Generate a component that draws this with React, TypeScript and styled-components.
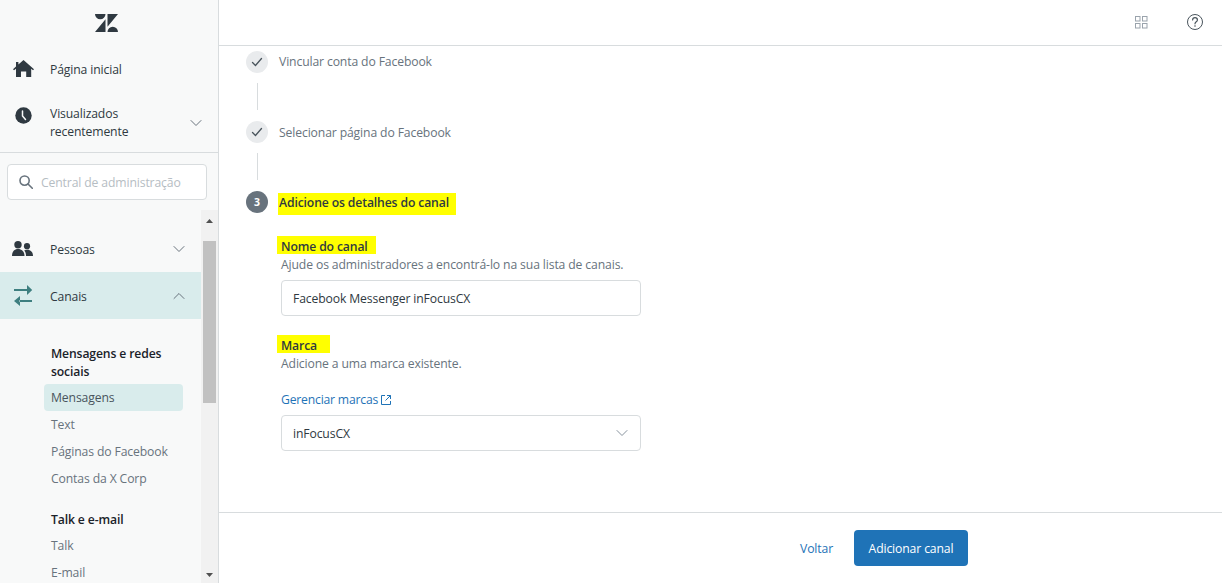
import React from "react";
import styled, { createGlobalStyle } from "styled-components";

const GlobalStyle = createGlobalStyle`
  html, body {
    margin: 0;
    padding: 0;
    height: 100%;
    overflow: hidden;
    background: #fff;
  }
  * {
    box-sizing: border-box;
  }
`;

const fontStack = `"Open Sans", "Noto Sans", "Liberation Sans", sans-serif`;

const Page = styled.div`
  display: flex;
  width: 1222px;
  height: 583px;
  overflow: hidden;
  font-family: ${fontStack};
  font-size: 12.2px;
  letter-spacing: -0.13px;
  color: #2f3941;
`;

const Sidebar = styled.aside`
  display: flex;
  flex-direction: column;
  flex: 0 0 219px;
  height: 583px;
  background: #f8f9f9;
  border-right: 1px solid #d8dcde;
`;

const LogoBar = styled.div`
  display: flex;
  justify-content: center;
  align-items: center;
  height: 45px;
  padding-right: 6px;
`;

const TopNav = styled.nav`
  display: flex;
  flex-direction: column;
  height: 108px;
  border-bottom: 1px solid #d8dcde;
`;

const NavRow = styled.div<{ $active?: boolean; $height: number }>`
  display: flex;
  align-items: center;
  height: ${(p) => p.$height}px;
  background: ${(p) => (p.$active ? "#d9ecec" : "transparent")};
  line-height: 18px;
  color: #2f3941;
`;

const NavIcon = styled.span<{ $lift?: number }>`
  display: flex;
  justify-content: center;
  align-items: center;
  flex: 0 0 50px;
  padding-right: 4px;
  padding-bottom: ${(p) => p.$lift ?? 0}px;
`;

const NavLabel = styled.span`
  flex: 1;
  padding-top: 2px;
`;

const NavCaret = styled.span`
  display: flex;
  justify-content: center;
  flex: 0 0 44px;
  padding-top: 1px;
`;

const SearchWrap = styled.div`
  height: 57px;
  padding: 11px 11px 0 7px;
`;

const SearchBox = styled.div`
  display: flex;
  align-items: center;
  gap: 8px;
  height: 36px;
  padding-left: 11px;
  background: #fff;
  border: 1px solid #d8dcde;
  border-radius: 4px;
  color: #b6bdc3;
`;

const ScrollArea = styled.div`
  display: flex;
  flex: 1;
  min-height: 0;
`;

const ScrollContent = styled.div`
  flex: 0 0 201px;
  padding-top: 15px;
  overflow: hidden;
`;

const SubNav = styled.div`
  display: flex;
  flex-direction: column;
  padding: 26px 18px 0 44px;
`;

const SubTitle = styled.div<{ $gap?: number }>`
  margin-top: ${(p) => p.$gap ?? 0}px;
  margin-bottom: 3px;
  padding: 0 7px;
  font-weight: 600;
  line-height: 18px;
  color: #1a2229;
`;

const SubItem = styled.div<{ $active?: boolean }>`
  flex: 0 0 27px;
  padding: 0 7px;
  border-radius: 4px;
  background: ${(p) => (p.$active ? "#d9ecec" : "transparent")};
  line-height: 27px;
  color: ${(p) => (p.$active ? "#49545c" : "#68737d")};
`;

const Scrollbar = styled.div`
  display: flex;
  flex-direction: column;
  flex: 0 0 17px;
  padding-top: 2px;
  background: #f1f1f1;
`;

const ScrollArrow = styled.div`
  display: flex;
  flex: 0 0 17px;
  justify-content: center;
  align-items: center;
`;

const ScrollThumb = styled.div`
  flex: 0 0 162px;
  margin: 12px 2px 0;
  background: #c1c1c1;
`;

const ScrollSpacer = styled.div`
  flex: 1;
`;

const Main = styled.main`
  display: flex;
  flex-direction: column;
  flex: 1;
  min-width: 0;
`;

const Header = styled.header`
  display: flex;
  align-items: center;
  justify-content: flex-end;
  gap: 39px;
  height: 46px;
  padding: 0 19px 1px 0;
  border-bottom: 1px solid #d8dcde;
`;

const Content = styled.div`
  flex: 1;
  padding: 5px 0 0 27px;
  overflow: hidden;
`;

const Step = styled.div`
  display: flex;
  align-items: center;
  gap: 11px;
  height: 22px;
`;

const StepCircle = styled.span<{ $current?: boolean }>`
  display: flex;
  justify-content: center;
  align-items: center;
  flex: 0 0 22px;
  height: 22px;
  border-radius: 50%;
  background: ${(p) => (p.$current ? "#68737d" : "#e9ebed")};
  color: #fff;
  font-size: 10.5px;
  font-weight: 700;
`;

const StepLabel = styled.span<{ $nudge?: number }>`
  margin-top: ${(p) => p.$nudge ?? 0}px;
  color: #68737d;
`;

const Connector = styled.div`
  width: 1px;
  height: 27px;
  margin: 10px 0 11px 11px;
  background: #d8dcde;
`;

const Marker = styled.span`
  display: inline-block;
  width: 178px;
  height: 22px;
  margin: 4px 0 0 -1px;
  padding-left: 1px;
  background: #ffff00;
  font-weight: 600;
  line-height: 20px;
  color: #2f3941;
`;

const Form = styled.div`
  display: flex;
  flex-direction: column;
  width: 360px;
  margin: 23px 0 0 35px;
`;

const FieldMarker = styled.span<{ $width: number; $gap?: number }>`
  align-self: flex-start;
  width: ${(p) => p.$width}px;
  height: 18px;
  margin-top: ${(p) => p.$gap ?? 0}px;
  margin-left: -4px;
  padding-left: 4px;
  background: #ffff00;
  font-weight: 600;
  line-height: 22px;
  color: #2f3941;
`;

const Hint = styled.div`
  margin-top: 2px;
  line-height: 18px;
  color: #68737d;
`;

const TextBox = styled.div`
  display: flex;
  align-items: center;
  justify-content: space-between;
  flex: 0 0 36px;
  margin-top: 6px;
  padding: 0 12px 0 11px;
  border: 1px solid #d8dcde;
  border-radius: 4px;
  color: #2f3941;
`;

const ManageLink = styled.a`
  display: flex;
  align-items: center;
  gap: 3px;
  margin-top: 18px;
  line-height: 18px;
  letter-spacing: -0.2px;
  color: #1f73b7;
`;

const Footer = styled.footer`
  display: flex;
  align-items: center;
  justify-content: flex-end;
  gap: 21px;
  height: 71px;
  padding: 0 254px 0 0;
  border-top: 1px solid #d8dcde;
`;

const BackLink = styled.span`
  color: #1f73b7;
`;

const PrimaryButton = styled.button`
  width: 114px;
  height: 36px;
  border: 0;
  border-radius: 4px;
  background: #1f73b7;
  color: #fff;
  font-family: ${fontStack};
  font-size: 12.2px;
  letter-spacing: -0.13px;
`;

const Chevron = ({ up, color = "#68737d" }: { up?: boolean; color?: string }) => (
  <svg width="12" height="12" viewBox="0 0 12 12" fill="none">
    <path
      d={up ? "M1 8.5 6 3.5l5 5" : "M1 3.5 6 8.5l5-5"}
      stroke={color}
      strokeWidth="1"
      strokeLinecap="round"
    />
  </svg>
);

const Check = () => (
  <svg width="12" height="12" viewBox="0 0 12 12" fill="none">
    <path d="M1.5 6.5 4.5 9.5 10.5 2.5" stroke="#49545c" strokeWidth="1.3" strokeLinecap="round" />
  </svg>
);

const ZendeskLogo = () => (
  <svg width="23" height="18" viewBox="0 0 23 18" fill="#2f3941">
    <path d="M0 0h10.500a5.250 5.250 0 0 1-10.500 0zM12.500 0H23L12.500 12.800zM0 18 10.500 5.200V18zM12.500 18a5.250 5.250 0 0 1 10.500 0z" />
  </svg>
);

const HomeIcon = () => (
  <svg width="21" height="17" viewBox="0 0 21 17" fill="#2f3941">
    <path d="M10.500 0 21 9.200l-1 1-1.800-1.400V17h-5v-5.500H8V17H3V8.800l-2 1.500-1-1.100 3-2.600V2h2.400v2.600z" />
  </svg>
);

const ClockIcon = () => (
  <svg width="17" height="17" viewBox="0 0 17 17">
    <circle cx="8.500" cy="8.500" r="8.200" fill="#2f3941" />
    <path d="M7.500 4v5l3 3.500" stroke="#f8f9f9" strokeWidth="1.500" fill="none" strokeLinecap="round" />
  </svg>
);

const PeopleIcon = () => (
  <svg width="22" height="16" viewBox="0 0 22 16" fill="#2f3941">
    <circle cx="6" cy="3.800" r="3.700" />
    <path d="M0 15C0 10.500 2.500 8 6 8s6.500 2.500 6.500 7z" />
    <circle cx="15" cy="5.200" r="3.100" />
    <path d="M14 15c0-2.500-.6-4.300-1.800-5.500.8-.4 1.800-.7 3-.7 3.500 0 5.800 2.300 5.800 6.200z" />
  </svg>
);

const TransferIcon = () => (
  <svg width="20" height="22" viewBox="0 0 20 22" fill="#3e7f80">
    <path d="M1 4.100h13.500v1.800H1zM14 0l5.200 5L14 10z" />
    <path d="M6.500 15.100H19v1.800H6.500zM7 11l-6 5 6 5z" />
  </svg>
);

const SearchIcon = () => (
  <svg width="14" height="14" viewBox="0 0 14 14" fill="none" stroke="#68737d" strokeWidth="1.600">
    <circle cx="5.600" cy="5.600" r="4.600" />
    <path d="m9 9 4.300 4.300" strokeLinecap="round" />
  </svg>
);

const Triangle = ({ up }: { up?: boolean }) => (
  <svg width="7" height="4" viewBox="0 0 7 4" fill="#505050">
    <path d={up ? "M3.500 0 7 4H0z" : "M0 0h7L3.500 4z"} />
  </svg>
);

const GridIcon = () => (
  <svg width="13" height="13" viewBox="0 0 13 13" fill="none" stroke="#9aa3ac">
    <rect x=".5" y=".5" width="4.500" height="4.500" />
    <rect x="7.500" y=".5" width="4.500" height="4.500" />
    <rect x=".5" y="7.500" width="4.500" height="4.500" />
    <rect x="7.500" y="7.500" width="4.500" height="4.500" />
  </svg>
);

const HelpIcon = () => (
  <svg width="16" height="16" viewBox="0 0 16 16" fill="none" stroke="#49545c">
    <circle cx="8" cy="8" r="7.500" />
    <path d="M5.600 6C5.600 4.600 6.700 3.700 8 3.700s2.400.9 2.400 2.200C10.400 7.800 8 7.700 8 9.800" strokeLinecap="round" strokeWidth="1.200" />
    <circle cx="8" cy="12" r=".8" fill="#49545c" stroke="none" />
  </svg>
);

const ExternalIcon = () => (
  <svg width="10" height="10" viewBox="0 0 10 10" fill="none" stroke="#1f73b7">
    <path d="M4 .5H.5v9h9V6M6 .5h3.500V4M9.500.5 4.500 5.500" />
  </svg>
);

const App = () => {
  return (
    <Page>
      <GlobalStyle />
      <Sidebar>
        <LogoBar>
          <ZendeskLogo />
        </LogoBar>
        <TopNav>
          <NavRow $height={48}>
            <NavIcon>
              <HomeIcon />
            </NavIcon>
            <NavLabel>Página inicial</NavLabel>
          </NavRow>
          <NavRow $height={60}>
            <NavIcon $lift={14}>
              <ClockIcon />
            </NavIcon>
            <NavLabel>
              Visualizados
              <br />
              recentemente
            </NavLabel>
            <NavCaret>
              <Chevron />
            </NavCaret>
          </NavRow>
        </TopNav>
        <SearchWrap>
          <SearchBox>
            <SearchIcon />
            Central de administração
          </SearchBox>
        </SearchWrap>
        <ScrollArea>
          <ScrollContent>
            <NavRow $height={47}>
              <NavIcon>
                <PeopleIcon />
              </NavIcon>
              <NavLabel>Pessoas</NavLabel>
              <NavCaret>
                <Chevron />
              </NavCaret>
            </NavRow>
            <NavRow $active $height={47}>
              <NavIcon>
                <TransferIcon />
              </NavIcon>
              <NavLabel>Canais</NavLabel>
              <NavCaret>
                <Chevron up />
              </NavCaret>
            </NavRow>
            <SubNav>
              <SubTitle>Mensagens e redes sociais</SubTitle>
              <SubItem $active>Mensagens</SubItem>
              <SubItem>Text</SubItem>
              <SubItem>Páginas do Facebook</SubItem>
              <SubItem>Contas da X Corp</SubItem>
              <SubTitle $gap={19}>Talk e e-mail</SubTitle>
              <SubItem>Talk</SubItem>
              <SubItem>E-mail</SubItem>
            </SubNav>
          </ScrollContent>
          <Scrollbar>
            <ScrollArrow>
              <Triangle up />
            </ScrollArrow>
            <ScrollThumb />
            <ScrollSpacer />
            <ScrollArrow>
              <Triangle />
            </ScrollArrow>
          </Scrollbar>
        </ScrollArea>
      </Sidebar>
      <Main>
        <Header>
          <GridIcon />
          <HelpIcon />
        </Header>
        <Content>
          <Step>
            <StepCircle>
              <Check />
            </StepCircle>
            <StepLabel $nudge={-1}>Vincular conta do Facebook</StepLabel>
          </Step>
          <Connector />
          <Step>
            <StepCircle>
              <Check />
            </StepCircle>
            <StepLabel $nudge={1}>Selecionar página do Facebook</StepLabel>
          </Step>
          <Connector />
          <Step>
            <StepCircle $current>3</StepCircle>
            <Marker>Adicione os detalhes do canal</Marker>
          </Step>
          <Form>
            <FieldMarker $width={99}>Nome do canal</FieldMarker>
            <Hint>Ajude os administradores a encontrá-lo na sua lista de canais.</Hint>
            <TextBox>Facebook Messenger inFocusCX</TextBox>
            <FieldMarker $width={53} $gap={19}>Marca</FieldMarker>
            <Hint>Adicione a uma marca existente.</Hint>
            <ManageLink>
              Gerenciar marcas
              <ExternalIcon />
            </ManageLink>
            <TextBox>
              inFocusCX
              <Chevron color="#87929d" />
            </TextBox>
          </Form>
        </Content>
        <Footer>
          <BackLink>Voltar</BackLink>
          <PrimaryButton>Adicionar canal</PrimaryButton>
        </Footer>
      </Main>
    </Page>
  );
};

export default App;
